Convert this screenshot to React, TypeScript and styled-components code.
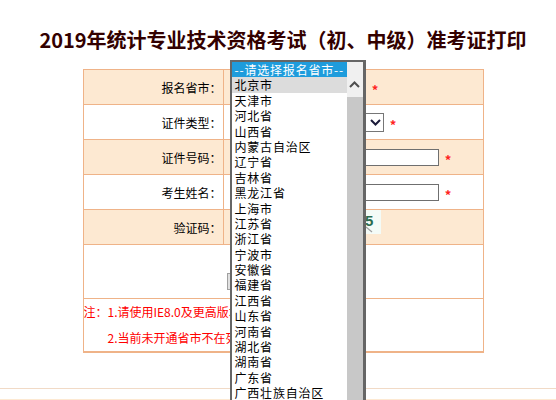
import React from 'react'
import styled, { createGlobalStyle } from 'styled-components'

const GlobalStyle = createGlobalStyle`
  html, body {
    margin: 0;
    padding: 0;
    overflow: hidden;
    background: #fff;
    font-family: "Noto Sans CJK SC", "Noto Sans", sans-serif;
  }
`

const Main = styled.div`
  padding: 26px 0 0 10px;
`

const Title = styled.h1`
  margin: 0;
  font-size: 20px;
  line-height: 28px;
  font-weight: 700;
  color: #330000;
  text-align: center;
`

const Form = styled.div`
  position: relative;
  width: 401px;
  box-sizing: border-box;
  margin: 15px auto 0;
  border: 1px solid #efb388;
`

const Row = styled.div<{ $shade?: boolean; $h?: number }>`
  display: grid;
  grid-template-columns: 140px 1fr;
  height: ${(p) => p.$h ?? 34}px;
  background: ${(p) => (p.$shade ? '#fde9d2' : '#fff')};
  border-bottom: 1px solid #efb388;
  &:last-child {
    border-bottom: none;
  }
`

const Label = styled.div`
  border-right: 1px solid #efb388;
  display: flex;
  align-items: center;
  justify-content: flex-end;
  padding-right: 1px;
  font-size: 12px;
  color: #000;
`

const Value = styled.div<{ $top?: boolean }>`
  display: flex;
  align-items: ${(p) => (p.$top ? 'flex-start' : 'center')};
  gap: 6px;
  padding-left: 6px;
`

const FullCell = styled.div`
  grid-column: 1 / -1;
  display: flex;
  justify-content: center;
  padding-top: 28px;
`

const Select = styled.div<{ $w: number }>`
  width: ${(p) => p.$w}px;
  height: 19px;
  box-sizing: border-box;
  border: 1px solid #767676;
  background: #fff;
  display: flex;
  align-items: center;
  justify-content: flex-end;
  padding-right: 2px;
  font-size: 12px;
`

const Input = styled.div<{ $w: number; $mt?: number }>`
  width: ${(p) => p.$w}px;
  height: 17px;
  margin-top: ${(p) => p.$mt ?? 0}px;
  box-sizing: border-box;
  border: 1px solid #6f6f6f;
  background: #fff;
`

const Star = styled.span`
  color: #f22;
  font-size: 13px;
  line-height: 1;
  font-weight: 700;
  width: 7px;
  text-align: center;
  transform: translateY(2px);
`

const Captcha = styled.svg`
  display: block;
  background: #f4fbf7;
`

const Button = styled.div`
  width: 112px;
  height: 17px;
  box-sizing: border-box;
  border: 1px solid #a0a0a0;
  background: #e1e1e1;
  font-size: 12px;
  line-height: 15px;
  text-align: center;
  color: #000;
`

const Notes = styled.div`
  grid-column: 1 / -1;
  display: flex;
  color: #f00;
  font-size: 12px;
  line-height: 26px;
  white-space: nowrap;
  overflow: hidden;
`

const NoteLines = styled.div`
  display: flex;
  flex-direction: column;
`

const Dropdown = styled.div`
  position: absolute;
  left: 146px;
  top: -10px;
  width: 136px;
  height: 345px;
  box-sizing: border-box;
  border: 2px solid #666;
  border-right-width: 3px;
  background: #fff;
  display: flex;
  overflow: hidden;
  z-index: 2;
`

const OptionList = styled.div`
  flex: 1;
  display: flex;
  flex-direction: column;
`

const Option = styled.div<{ $state?: 'selected' | 'hover' }>`
  height: 15.4px;
  flex: none;
  line-height: 15.4px;
  padding-left: 3px;
  font-size: 12px;
  letter-spacing: 0.8px;
  white-space: nowrap;
  color: ${(p) => (p.$state === 'selected' ? '#fff' : '#000')};
  background: ${(p) =>
    p.$state === 'selected' ? '#1e9cdc' : p.$state === 'hover' ? '#dcdcdc' : '#fff'};
`

const Scrollbar = styled.div`
  width: 16px;
  display: flex;
  flex-direction: column;
  background: #f0f0f0;
`

const ScrollUp = styled.div`
  height: 35px;
  display: flex;
  align-items: flex-end;
  justify-content: center;
  padding-bottom: 9px;
  box-sizing: border-box;
`

const Thumb = styled.div`
  flex: 1;
  background: #c8c8c8;
`

const Footer = styled.div`
  margin-top: 35px;
  border-top: 1px solid #f1dac6;
  padding-top: 10px;
`

const FooterBand = styled.div`
  height: 60px;
  background: #fde9d2;
`

const provinces = [
  '北京市', '天津市', '河北省', '山西省', '内蒙古自治区', '辽宁省', '吉林省',
  '黑龙江省', '上海市', '江苏省', '浙江省', '宁波市', '安徽省', '福建省',
  '江西省', '山东省', '河南省', '湖北省', '湖南省', '广东省', '广西壮族自治区',
  '海南省', '重庆市',
]

const captchaDigits = ['8', '7', '3', '5']

const Chevron = ({ up }: { up?: boolean }) => (
  <svg width="11" height="7" viewBox="0 0 11 7">
    <path
      d={up ? 'M1 6 L5.5 1.5 L10 6' : 'M1 1 L5.5 5.5 L10 1'}
      fill="none"
      stroke={up ? '#4f4f4f' : '#1b1b3a'}
      strokeWidth="2"
    />
  </svg>
)

const App = () => (
  <React.Fragment>
    <GlobalStyle />
    <Main>
      <Title>2019年统计专业技术资格考试（初、中级）准考证打印</Title>
      <Form>
        <Row $shade>
          <Label>报名省市：</Label>
          <Value>
            <Select $w={136} />
            <Star>*</Star>
          </Value>
        </Row>
        <Row>
          <Label>证件类型：</Label>
          <Value>
            <Select $w={154}>
              <Chevron />
            </Select>
            <Star>*</Star>
          </Value>
        </Row>
        <Row $shade>
          <Label>证件号码：</Label>
          <Value>
            <Input $w={209} />
            <Star>*</Star>
          </Value>
        </Row>
        <Row>
          <Label>考生姓名：</Label>
          <Value>
            <Input $w={209} />
            <Star>*</Star>
          </Value>
        </Row>
        <Row $shade>
          <Label>验证码：</Label>
          <Value $top>
            <Input $w={85} $mt={4} />
            <Captcha width="60" height="24" viewBox="0 0 60 24">
              {captchaDigits.map((d, i) => (
                <text
                  key={i}
                  x={8 + i * 12}
                  y="16"
                  fontSize="15"
                  fontWeight="700"
                  fill="#2b6b4e"
                  fontFamily="Liberation Sans, sans-serif"
                >
                  {d}
                </text>
              ))}
              <path d="M45 17 L51 22" stroke="#a0a0a0" strokeWidth="1.2" />
            </Captcha>
          </Value>
        </Row>
        <Row $h={53}>
          <FullCell>
            <Button>打印准考证</Button>
          </FullCell>
        </Row>
        <Row $h={52}>
          <Notes>
            <span>注：</span>
            <NoteLines>
              <span>1.请使用IE8.0及更高版本的浏览器进行打印</span>
              <span>2.当前未开通省市不在列表中显示</span>
            </NoteLines>
          </Notes>
        </Row>
        <Dropdown>
          <OptionList>
            <Option $state="selected">--请选择报名省市--</Option>
            {provinces.map((p, i) => (
              <Option key={p} $state={i === 0 ? 'hover' : undefined}>
                {p}
              </Option>
            ))}
          </OptionList>
          <Scrollbar>
            <ScrollUp>
              <Chevron up />
            </ScrollUp>
            <Thumb />
          </Scrollbar>
        </Dropdown>
      </Form>
    </Main>
    <Footer>
      <FooterBand />
    </Footer>
  </React.Fragment>
)

export default App
